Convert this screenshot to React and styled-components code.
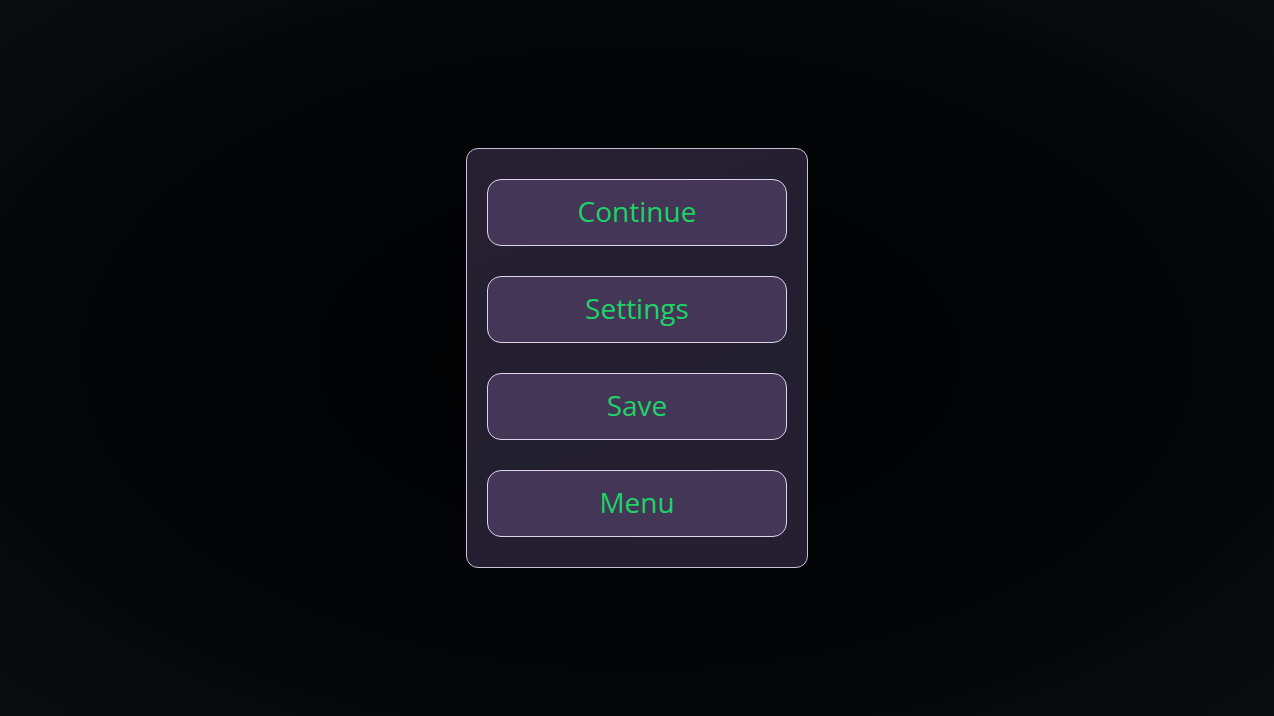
import React from "react";
import styled, { createGlobalStyle } from "styled-components";

const Global = createGlobalStyle`
  html, body {
    margin: 0;
    padding: 0;
    height: 100%;
  }
  body {
    background: #030405;
    font-family: "Open Sans", "Noto Sans", sans-serif;
  }
`;

const Screen = styled.div`
  width: 100vw;
  height: 100vh;
  display: flex;
  align-items: center;
  justify-content: center;
  background: radial-gradient(ellipse at 50% 50%, #020203 0%, #030405 55%, #090c0d 100%);
`;

const Panel = styled.div`
  width: 300px;
  padding: 30px 20px;
  display: flex;
  flex-direction: column;
  gap: 30px;
  border: 1px solid #c9c1d9;
  border-radius: 12px;
  background: linear-gradient(160deg, #272032 0%, #221f2f 60%, #261f32 100%);
`;

const MenuButton = styled.button`
  height: 67px;
  width: 100%;
  border: 1px solid #ddd5ec;
  border-radius: 14px;
  background: #433657;
  color: #1fd267;
  font-family: "Open Sans", "Noto Sans", sans-serif;
  font-size: 28px;
  cursor: pointer;
  padding: 0 0 4px;
`;

const items = ["Continue", "Settings", "Save", "Menu"];

const App = () => {
  return (
    <Screen>
      <Global />
      <Panel>
        {items.map((t) => (
          <MenuButton key={t}>{t}</MenuButton>
        ))}
      </Panel>
    </Screen>
  );
};

export default App;
